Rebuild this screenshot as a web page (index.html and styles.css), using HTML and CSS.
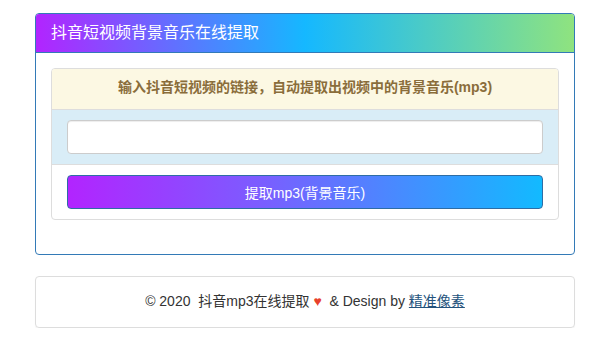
FILE: index.html
```html
<!DOCTYPE html>
<html lang="zh-CN">
<head>
  <meta charset="UTF-8" />
  <meta name="viewport" content="width=device-width, initial-scale=1.0" />
  <title>抖音短视频背景音乐在线提取</title>
  <link rel="stylesheet" href="styles.css">
</head>
<body>
  <div class="container">
    <div class="panel">
      <div class="panel-heading">抖音短视频背景音乐在线提取</div>
      <div class="panel-body">
        <div class="list">
          <div class="row row-warning">输入抖音短视频的链接，自动提取出视频中的背景音乐(mp3)</div>
          <div class="row row-info">
            <input type="text" name="url" />
          </div>
          <div class="row">
            <button type="button">提取mp3(背景音乐)</button>
          </div>
        </div>
      </div>
    </div>

    <div class="footer">
      © 2020&nbsp; 抖音mp3在线提取 <span class="heart">♥</span>&nbsp; &amp; Design by <a href="#">精准像素</a>
    </div>
  </div>
</body>
</html>
```

FILE: styles.css
```css
* {
  box-sizing: border-box;
}
body {
  margin: 0;
  font-family: "Liberation Sans", Arial, "Noto Sans CJK SC", sans-serif;
  font-size: 14px;
  line-height: 1.42857;
  color: #333;
  background: #fff;
}
.container {
  width: 540px;
  margin: 13px 0 0 35px;
}
.panel {
  border: 1px solid #337ab7;
  border-radius: 4px;
  margin-bottom: 21px;
}
.panel-heading {
  height: 39px;
  padding: 8px 15px 0;
  font-size: 16px;
  color: #fff;
  background: linear-gradient(90deg, #b224ff 0%, #15b8ff 50%, #8fe37f 100%);
  border-bottom: 1px solid #337ab7;
  border-radius: 3px 3px 0 0;
}
.panel-body {
  padding: 15px 15px 34px;
}
.list {
  border: 1px solid #ddd;
  border-radius: 4px;
  overflow: hidden;
}
.row {
  padding: 10px 15px;
  border-top: 1px solid #ddd;
}
.row:first-child {
  border-top: none;
}
.row-warning {
  height: 40px;
  padding-top: 9px;
  text-align: center;
  font-weight: bold;
  color: #8a6d3b;
  background: #fcf8e3;
}
.row-info {
  background: #d9edf7;
}
input {
  display: block;
  width: 100%;
  height: 34px;
  padding: 6px 12px;
  border: 1px solid #ccc;
  border-radius: 4px;
  background: #fff;
  box-shadow: inset 0 1px 1px rgba(0,0,0,0.075);
}
button {
  display: block;
  width: 100%;
  height: 34px;
  font-family: inherit;
  font-size: 14px;
  color: #fff;
  background: linear-gradient(90deg, #b224ff 0%, #7c5cff 40%, #12baff 100%);
  border: 1px solid #2e6da4;
  border-radius: 4px;
  cursor: pointer;
}
.footer {
  height: 52px;
  padding-top: 15px;
  text-align: center;
  border: 1px solid #ddd;
  border-radius: 4px;
  box-shadow: 0 1px 1px rgba(0,0,0,0.05);
}
.heart {
  color: #e8412c;
}
.footer a {
  color: #23527c;
  text-decoration: underline;
}
```
